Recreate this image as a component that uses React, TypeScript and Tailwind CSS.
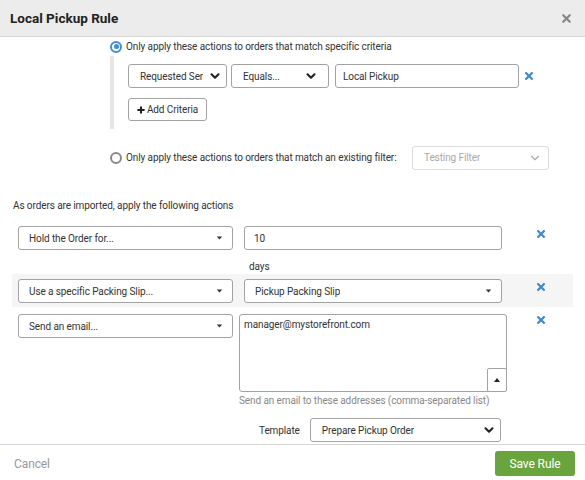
import { ChevronDown, X } from 'lucide-react';

function BlueX() {
  return (
    <svg width="8" height="8" viewBox="0 0 10 10" className="text-[#3a8ad6]">
      <path d="M1.5 1.5 L8.5 8.5 M8.5 1.5 L1.5 8.5" stroke="currentColor" strokeWidth="2.8" strokeLinecap="square" />
    </svg>
  );
}

function Caret() {
  return (
    <svg width="7" height="4" viewBox="0 0 8 5" className="text-[#333]">
      <path d="M0.5 0.5 L7.5 0.5 L4 4.5 Z" fill="currentColor" />
    </svg>
  );
}

function ChevronSelect({ label, className = '', disabled = false }: { label: string; className?: string; disabled?: boolean }) {
  return (
    <div
      className={`flex items-center justify-between rounded-[3px] border bg-white pl-[11px] pr-[4px] text-[10px] ${
        disabled ? 'border-[#dcdcdc] text-[#a8a8a8]' : 'border-[#a3a3a3] text-[#333]'
      } ${className}`}
    >
      <span className="truncate">{label}</span>
      <ChevronDown className={`h-[14px] w-[14px] shrink-0 ${disabled ? 'text-[#aaa]' : 'text-[#222]'}`} strokeWidth={disabled ? 2 : 3.6} />
    </div>
  );
}

function CaretSelect({ label, className = '' }: { label: string; className?: string }) {
  return (
    <div className={`flex items-center justify-between rounded-[3px] border border-[#a3a3a3] bg-white pl-[10px] pr-[9px] text-[10px] text-[#333] ${className}`}>
      <span className="truncate">{label}</span>
      <Caret />
    </div>
  );
}

export default function App() {
  return (
    <div className="flex h-[480px] w-[585px] flex-col bg-white font-['Roboto',sans-serif] tracking-[-0.1px] text-[#333]">
      {/* Header */}
      <div className="flex h-[37px] shrink-0 items-center justify-between border-b border-[#d6d6d6] bg-[#ececec] pl-[10px] pr-[12px]">
        <h1 className="text-[13.5px] font-bold tracking-normal text-[#222]">Local Pickup Rule</h1>
        <X className="h-[13px] w-[13px] text-[#858585]" strokeWidth={4} />
      </div>

      {/* Body */}
      <div className="flex-1 overflow-hidden">
        <div className="pl-[110px]">
          <label className="flex h-[19px] items-center gap-[4px] text-[10px]">
            <span className="flex h-[12px] w-[12px] items-center justify-center rounded-full border-2 border-[#3d8ee0]">
              <span className="h-[5px] w-[5px] rounded-full bg-[#3d8ee0]" />
            </span>
            Only apply these actions to orders that match specific criteria
          </label>
          <div className="border-l-[4px] border-[#e6e6e6] pb-[8px] pl-[14px] pt-[8px]">
            <div className="flex items-center">
              <ChevronSelect label="Requested Ser" className="h-[24px] w-[99px]" />
              <ChevronSelect label="Equals..." className="ml-[4px] h-[24px] w-[98px] pr-[10px]" />
              <div className="ml-[6px] flex h-[24px] w-[184px] items-center rounded-[3px] border border-[#a3a3a3] pl-[7px] text-[10px]">
                Local Pickup
              </div>
              <span className="ml-[6px] flex items-center">
                <BlueX />
              </span>
            </div>
            <button className="mt-[10px] flex h-[23px] w-[79px] items-center justify-center gap-[2px] rounded-[3px] border border-[#a3a3a3] bg-white text-[10px] text-[#333]">
              <svg width="8" height="8" viewBox="0 0 10 10">
                <path d="M5 0.5 V9.5 M0.5 5 H9.5" stroke="#222" strokeWidth="2.6" />
              </svg>
              Add Criteria
            </button>
          </div>
        </div>

        <div className="mt-[16px] flex h-[25px] items-center pl-[110px]">
          <label className="flex items-center gap-[4px] text-[10px]">
            <span className="h-[12px] w-[12px] rounded-full border-2 border-[#8a8a8a]" />
            Only apply these actions to orders that match an existing filter:
          </label>
          <ChevronSelect label="Testing Filter" disabled className="ml-auto mr-[36px] h-[24px] w-[137px] pr-[6px]" />
        </div>

        <p className="mt-[29px] pl-[13px] text-[10px] leading-[14px]">As orders are imported, apply the following actions</p>

        {/* Action 1 */}
        <div className="mt-[13px] flex items-start pl-[18px]">
          <CaretSelect label="Hold the Order for..." className="h-[24px] w-[215px]" />
          <div className="ml-[11px] flex flex-col">
            <div className="flex h-[24px] w-[258px] items-center rounded-[3px] border border-[#a3a3a3] pl-[9px] text-[10px]">10</div>
            <span className="mt-[10px] pl-[5px] text-[10px] leading-[14px]">days</span>
          </div>
          <span className="ml-[35px] mt-[4px] flex">
            <BlueX />
          </span>
        </div>

        {/* Action 2 */}
        <div className="mx-[12px] flex items-start bg-[#f5f5f5] pb-[4px] pl-[6px] pt-[5px]">
          <CaretSelect label="Use a specific Packing Slip..." className="h-[24px] w-[215px]" />
          <CaretSelect label="Pickup Packing Slip" className="ml-[11px] h-[24px] w-[258px]" />
          <span className="ml-[35px] mt-[4px] flex">
            <BlueX />
          </span>
        </div>

        {/* Action 3 */}
        <div className="mt-[7px] flex items-start pl-[18px]">
          <CaretSelect label="Send an email..." className="h-[24px] w-[215px]" />
          <div className="ml-[6px] flex flex-col">
            <div className="relative h-[78px] w-[268px] rounded-[3px] border border-[#a3a3a3] px-[4px] pt-[3px] text-[10px] leading-[14px]">
              manager@mystorefront.com
              <span className="absolute bottom-[-1px] right-[-1px] flex h-[24px] w-[20px] items-center justify-center rounded-[2px] border border-[#a3a3a3] bg-white">
                <svg width="6" height="4" viewBox="0 0 6 4">
                  <path d="M0 4 L6 4 L3 0 Z" fill="#222" />
                </svg>
              </span>
            </div>
            <span className="mt-[3px] text-[10px] leading-[12px] text-[#888]">Send an email to these addresses (comma-separated list)</span>
            <div className="mt-[11px] flex items-center">
              <span className="ml-[20px] text-[10px]">Template</span>
              <ChevronSelect label="Prepare Pickup Order" className="ml-[10px] h-[24px] w-[191px] pl-[6px]" />
            </div>
          </div>
          <span className="ml-[30px] mt-[2px] flex">
            <BlueX />
          </span>
        </div>
      </div>

      {/* Footer */}
      <div className="flex h-[36px] shrink-0 items-center justify-between border-t border-[#d6d6d6] pl-[14px] pr-[10px] pt-[2px]">
        <span className="text-[12px] text-[#999]">Cancel</span>
        <button className="h-[25px] w-[80px] rounded-[3px] bg-[#6aa43c] text-[12px] text-white">Save Rule</button>
      </div>
    </div>
  );
}
